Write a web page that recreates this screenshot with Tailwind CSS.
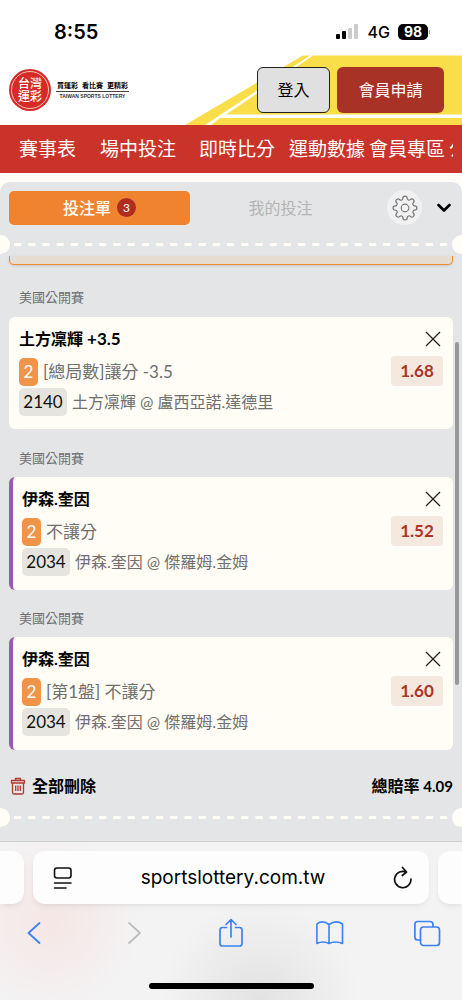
<!DOCTYPE html>
<html lang="zh-Hant">
<head>
    <meta charset="UTF-8" />
    <meta name="viewport" content="width=device-width, initial-scale=1.0" />
    <title>台灣運彩 - 投注單</title>
    <script src="https://cdn.jsdelivr.net/npm/@tailwindcss/browser@4"></script>
</head>
<body class="bg-[#fffdf5] text-black font-[Lato,'Noto_Sans_CJK_TC',sans-serif] overflow-hidden">
    <div class="h-screen flex flex-col">
        <!-- Status bar -->
        <div class="h-[55px] shrink-0 bg-white flex items-center justify-between pt-2 pl-[54px] pr-8 font-[Inter,sans-serif]">
            <span class="text-[20px] font-semibold">8:55</span>
            <div class="flex items-center">
                <svg class="w-6 h-4" viewBox="0 0 24 16">
                    <rect x="0" y="10" width="4" height="5" rx="1" fill="#000" />
                    <rect x="6" y="7" width="4" height="8" rx="1" fill="#000" />
                    <rect x="12" y="4" width="4" height="11" rx="1" fill="#ccc" />
                    <rect x="18" y="0" width="4" height="15" rx="1" fill="#ccc" />
                </svg>
                <span class="ml-2 text-base font-medium">4G</span>
                <span class="ml-2 w-[30px] h-4 rounded-[5px] bg-black text-white text-[14px] leading-4 font-bold text-center">98</span>
                <span class="ml-px w-px h-1 bg-gray-400"></span>
            </div>
        </div>

        <!-- Header -->
        <header class="relative h-[70px] shrink-0 bg-white flex items-center justify-between pl-[9px] pr-[18px]">
            <svg class="absolute right-0 top-0 w-[280px] h-[70px]" viewBox="0 0 280 70" fill="#f9de4a">
                <path d="M3 70 121 0.500H128L23 70z" />
                <path d="M44 59.500 131 0.500H280V59.500z" />
                <path d="M38 63H280V70H29z" />
            </svg>
            <a href="#" class="relative flex items-center gap-[5px]">
                <span class="relative w-[42px] h-[42px] rounded-full bg-[#d62b25] text-white flex items-center justify-center">
                    <span class="absolute inset-[2px] rounded-full border border-white/70"></span>
                    <span class="w-6 text-center text-[12px] leading-[13px] font-medium">台灣<br />運彩</span>
                </span>
                <span class="w-[73px] text-center">
                    <span class="flex justify-between text-[7px] leading-[11px] font-bold border-b border-[#444] px-px"><span>買運彩</span><span>看比賽</span><span>更精彩</span></span>
                    <span class="block text-[5px] leading-[9px] font-bold text-[#333] whitespace-nowrap font-['Liberation_Sans',sans-serif]">TAIWAN SPORTS LOTTERY</span>
                </span>
            </a>
            <div class="relative flex gap-[7px]">
                <button class="w-[73px] h-[46px] rounded-md border border-[#222] bg-[#e0e0e0] text-base">登入</button>
                <button class="w-[107px] h-[46px] rounded-md bg-[#a83226] text-white text-base">會員申請</button>
            </div>
        </header>

        <!-- Menu -->
        <nav class="h-12 shrink-0 bg-[#c93329] pr-[9px]">
            <div class="h-full overflow-hidden flex items-center pl-[19px] text-white text-[19px] whitespace-nowrap">
                <a href="#" class="mr-6">賽事表</a>
                <a href="#" class="mr-[23px]">場中投注</a>
                <a href="#" class="mr-3.5">即時比分</a>
                <a href="#" class="mr-1">運動數據</a>
                <a href="#" class="mr-1">會員專區</a>
                <a href="#">公告</a>
            </div>
        </nav>

        <!-- Bet slip -->
        <main class="relative mt-[9px] flex-1 min-h-0 rounded-t-[10px] bg-[#e4e5e7] overflow-hidden">
            <div class="flex items-center pt-2 px-[9px]">
                <button class="flex-1 h-[34px] rounded-[5px] bg-[#f08330] text-[#fffdf5] text-base font-medium flex items-center justify-center gap-1.5">
                    投注單
                    <span class="w-[19px] h-[19px] rounded-full bg-[#b02c20] text-[12px] leading-[19px]">3</span>
                </button>
                <button class="flex-1 h-[34px] text-base text-[#b4b5b6]">我的投注</button>
                <button class="w-[35px] h-[35px] ml-4 mr-3 rounded-full bg-[#f1f1f1] flex items-center justify-center" aria-label="設定">
                    <svg class="w-[26px] h-[26px]" viewBox="0 0 24 24" fill="none" stroke="#777" stroke-width="1.100" stroke-linejoin="round">
                        <circle cx="12" cy="12" r="3.500" />
                        <path d="M19.400 15a1.650 1.650 0 0 0 .33 1.820l.06.06a2 2 0 0 1-2.830 2.830l-.06-.06a1.650 1.650 0 0 0-1.820-.33 1.650 1.650 0 0 0-1 1.510V21a2 2 0 0 1-4 0v-.09A1.650 1.650 0 0 0 9 19.400a1.650 1.650 0 0 0-1.820.33l-.06.06a2 2 0 0 1-2.830-2.830l.06-.06a1.650 1.650 0 0 0 .33-1.820 1.650 1.650 0 0 0-1.510-1H3a2 2 0 0 1 0-4h.09A1.650 1.650 0 0 0 4.600 9a1.650 1.650 0 0 0-.33-1.820l-.06-.06a2 2 0 0 1 2.830-2.830l.06.06a1.650 1.650 0 0 0 1.820.33H9a1.650 1.650 0 0 0 1-1.510V3a2 2 0 0 1 4 0v.09a1.650 1.650 0 0 0 1 1.510 1.650 1.650 0 0 0 1.820-.33l.06-.06a2 2 0 0 1 2.830 2.830l-.06.06a1.650 1.650 0 0 0-.33 1.820V9a1.650 1.650 0 0 0 1.510 1H21a2 2 0 0 1 0 4h-.09a1.650 1.650 0 0 0-1.510 1z" />
                    </svg>
                </button>
                <button class="w-[19px] h-[34px] flex items-center justify-center" aria-label="收合">
                    <svg class="w-[14px] h-[10px]" viewBox="0 0 14 10" fill="none" stroke="#000" stroke-width="2.600" stroke-linecap="round" stroke-linejoin="round">
                        <path d="M1.500 2 7 7.500 12.500 2" />
                    </svg>
                </button>
            </div>

            <div class="mt-2.5 flex items-center">
                <span class="w-[19px] h-[19px] -ml-[9px] rounded-full bg-[#fffdf5]"></span>
                <svg class="flex-1 h-[3px] mx-1"><line x1="0" x2="100%" y1="1.500" y2="1.500" stroke="#fffdf5" stroke-width="3" stroke-dasharray="7.200 7" /></svg>
                <span class="w-[19px] h-[19px] -mr-[9px] rounded-full bg-[#fffdf5]"></span>
            </div>

            <div class="mt-0.5 mx-[9px] h-[9px] rounded-b-[5px] border border-t-0 border-[#f08c2e] bg-[#e6dccf] shadow-sm"></div>

            <section class="px-[9px] pt-[23px]">
                <h2 class="pl-2.5 text-[13px] leading-[18px] text-[#6f6f6f]">美國公開賽</h2>
                <div class="mt-[11px] h-[112px] rounded-md bg-[#fffdf5] pt-2.5 px-2.5 flex justify-between">
                    <div>
                        <h3 class="h-6 flex items-center gap-1 text-base font-bold">土方凜輝 <span class="text-[17px]">+3.5</span></h3>
                        <p class="mt-[7px] flex items-center gap-[5px] text-[17px] leading-7 text-[#6f6f6f]">
                            <span class="w-[19px] rounded-[5px] bg-[#f0944a] text-white text-center">2</span>
                            <span>[總局數]讓分 -3.5</span>
                        </p>
                        <p class="mt-0.5 flex items-center gap-[5px] text-base leading-7 text-[#6f6f6f]">
                            <span class="w-12 rounded-[5px] bg-[#e6e4de] text-[17px] text-[#111] text-center">2140</span>
                            <span>土方凜輝 @ 盧西亞諾.達德里</span>
                        </p>
                    </div>
                    <div class="flex flex-col items-end">
                        <button class="w-5 h-6 flex items-center justify-center" aria-label="移除">
                            <svg class="w-4 h-4" viewBox="0 0 16 16" stroke="#222" stroke-width="1.300"><path d="M1 1 15 15M15 1 1 15" /></svg>
                        </button>
                        <span class="mt-[5px] w-[52px] rounded bg-[#f5e8df] text-[17px] leading-[30px] font-bold text-[#ab3427] text-center">1.68</span>
                    </div>
                </div>
            </section>

            <section class="px-[9px] pt-5">
                <h2 class="pl-2.5 text-[13px] leading-[18px] text-[#6f6f6f]">美國公開賽</h2>
                <div class="mt-2.5 h-[113px] rounded-md border-l-4 border-[#9b59b6] bg-[#fffdf5] pt-2.5 pl-[9px] pr-2.5 flex justify-between">
                    <div>
                        <h3 class="h-6 flex items-center text-base font-bold">伊森.奎因</h3>
                        <p class="mt-[7px] flex items-center gap-[5px] text-[17px] leading-7 text-[#6f6f6f]">
                            <span class="w-[19px] rounded-[5px] bg-[#f0944a] text-white text-center">2</span>
                            <span>不讓分</span>
                        </p>
                        <p class="mt-0.5 flex items-center gap-[5px] text-base leading-7 text-[#6f6f6f]">
                            <span class="w-12 rounded-[5px] bg-[#e6e4de] text-[17px] text-[#111] text-center">2034</span>
                            <span>伊森.奎因 @ 傑羅姆.金姆</span>
                        </p>
                    </div>
                    <div class="flex flex-col items-end">
                        <button class="w-5 h-6 flex items-center justify-center" aria-label="移除">
                            <svg class="w-4 h-4" viewBox="0 0 16 16" stroke="#222" stroke-width="1.300"><path d="M1 1 15 15M15 1 1 15" /></svg>
                        </button>
                        <span class="mt-[5px] w-[52px] rounded bg-[#f5e8df] text-[17px] leading-[30px] font-bold text-[#ab3427] text-center">1.52</span>
                    </div>
                </div>
            </section>

            <section class="px-[9px] pt-[19px]">
                <h2 class="pl-2.5 text-[13px] leading-[18px] text-[#6f6f6f]">美國公開賽</h2>
                <div class="mt-2.5 h-[113px] rounded-md border-l-4 border-[#9b59b6] bg-[#fffdf5] pt-2.5 pl-[9px] pr-2.5 flex justify-between">
                    <div>
                        <h3 class="h-6 flex items-center text-base font-bold">伊森.奎因</h3>
                        <p class="mt-[7px] flex items-center gap-[5px] text-[17px] leading-7 text-[#6f6f6f]">
                            <span class="w-[19px] rounded-[5px] bg-[#f0944a] text-white text-center">2</span>
                            <span>[第1盤] 不讓分</span>
                        </p>
                        <p class="mt-0.5 flex items-center gap-[5px] text-base leading-7 text-[#6f6f6f]">
                            <span class="w-12 rounded-[5px] bg-[#e6e4de] text-[17px] text-[#111] text-center">2034</span>
                            <span>伊森.奎因 @ 傑羅姆.金姆</span>
                        </p>
                    </div>
                    <div class="flex flex-col items-end">
                        <button class="w-5 h-6 flex items-center justify-center" aria-label="移除">
                            <svg class="w-4 h-4" viewBox="0 0 16 16" stroke="#222" stroke-width="1.300"><path d="M1 1 15 15M15 1 1 15" /></svg>
                        </button>
                        <span class="mt-[5px] w-[52px] rounded bg-[#f5e8df] text-[17px] leading-[30px] font-bold text-[#ab3427] text-center">1.60</span>
                    </div>
                </div>
            </section>

            <div class="mt-6 px-[9px] flex items-center justify-between text-base leading-6 font-bold">
                <button class="flex items-center gap-1.5">
                    <svg class="w-[17px] h-[18px]" viewBox="0 0 17 18" fill="none" stroke="#b23a30" stroke-width="1.300" stroke-linejoin="round">
                        <path d="M2.500 3.500H15.500V6H2.500zM6.500 3.500V1.500H11.500V3.500M3.500 6V15.500Q3.500 17 5 17H13Q14.500 17 14.500 15.500V6M6.700 8.500V14M9 8.500V14M11.300 8.500V14" />
                    </svg>
                    全部刪除
                </button>
                <span>總賠率 <span class="text-[15px]">4.09</span></span>
            </div>

            <div class="mt-2.5 flex items-center">
                <span class="w-[19px] h-[19px] -ml-[9px] rounded-full bg-[#fffdf5]"></span>
                <svg class="flex-1 h-[3px] mx-1"><line x1="0" x2="100%" y1="1.500" y2="1.500" stroke="#fffdf5" stroke-width="3" stroke-dasharray="7.200 7" /></svg>
                <span class="w-[19px] h-[19px] -mr-[9px] rounded-full bg-[#fffdf5]"></span>
            </div>

            <!-- Scroll thumb -->
            <div class="absolute right-[3px] top-40 w-1 h-[343px] rounded-full bg-[#98989a]"></div>
        </main>

        <!-- Browser toolbar -->
        <footer class="shrink-0 h-[159px] border-t border-[#cfd0d1] bg-[#f3f3f4] bg-[radial-gradient(circle_at_50px_80px,#f5e6e5,transparent_90px),radial-gradient(circle_at_260px_159px,#e2e2e3,transparent_100px)] font-[Inter,sans-serif]">
            <div class="pt-[9px] flex gap-[9px]">
                <div class="w-6 h-[53px] rounded-r-xl bg-[#fdfdfd] shadow-md shadow-black/5"></div>
                <div class="flex-1 h-[53px] rounded-xl bg-[#fdfdfd] shadow-md shadow-black/5 flex items-center justify-between pl-5 pr-4">
                    <button aria-label="頁面選單">
                        <svg class="w-5 h-6" viewBox="0 0 20 24" fill="none" stroke="#111" stroke-width="1.600" stroke-linecap="round">
                            <rect x="1.500" y="2" width="16.500" height="10" rx="2.500" />
                            <path d="M1.500 17H18M1.500 22H13" />
                        </svg>
                    </button>
                    <span class="pt-0.5 text-[19px]">sportslottery.com.tw</span>
                    <button aria-label="重新載入">
                        <svg class="w-5 h-6" viewBox="0 0 20 24" fill="none" stroke="#111" stroke-width="1.700" stroke-linecap="round" stroke-linejoin="round">
                            <path d="M18 13A8.200 8.200 0 1 1 13.500 6.200M9.500 1.500 13.500 6 9.300 9.500" />
                        </svg>
                    </button>
                </div>
                <div class="w-6 h-[53px] rounded-l-xl bg-[#fdfdfd] shadow-md shadow-black/5"></div>
            </div>
            <div class="mt-[13px] px-5 flex items-center justify-between text-[#3b82f7]">
                <button class="w-7 flex justify-center" aria-label="上一頁">
                    <svg class="w-4 h-8" viewBox="0 0 16 32" fill="none" stroke="currentColor" stroke-width="1.800" stroke-linecap="round" stroke-linejoin="round"><path d="M13.500 6 2.500 16 13.500 26" /></svg>
                </button>
                <button class="w-7 flex justify-center text-[#bdbdbe]" aria-label="下一頁">
                    <svg class="w-4 h-8" viewBox="0 0 16 32" fill="none" stroke="currentColor" stroke-width="1.800" stroke-linecap="round" stroke-linejoin="round"><path d="M4 6 15 16 4 26" /></svg>
                </button>
                <button class="w-7 flex justify-center" aria-label="分享">
                    <svg class="w-7 h-8" viewBox="0 0 28 32" fill="none" stroke="currentColor" stroke-width="1.700" stroke-linecap="round" stroke-linejoin="round"><path d="M9.500 10.500H5.500Q3 10.500 3 13V26.500Q3 29 5.500 29H22.500Q25 29 25 26.500V13Q25 10.500 22.500 10.500H18.500M14 20V2.500M9 7.500 14 2.500 19 7.500" /></svg>
                </button>
                <button class="w-7 flex justify-center" aria-label="書籤">
                    <svg class="w-7 h-8" viewBox="0 0 28 32" fill="none" stroke="currentColor" stroke-width="1.600" stroke-linecap="round" stroke-linejoin="round"><path d="M13 7.500Q6.500 2.500 .9 7V26.500Q7 23.500 13 26.500Q19 23.500 26.500 26.500V7Q20 2.500 13 7.500V26.500" /></svg>
                </button>
                <button class="w-7 flex justify-center" aria-label="分頁">
                    <svg class="w-7 h-8" viewBox="0 0 28 32" fill="none" stroke="currentColor" stroke-width="1.700" stroke-linejoin="round"><rect x="6.500" y="10" width="19" height="18.500" rx="3" /><path d="M6.500 23H3.500Q.9 23 .9 20V7.500Q.9 4.500 3.500 4.500H16Q19 4.500 19 7.500V10" /></svg>
                </button>
            </div>
            <div class="mt-[34px] mx-auto w-[165px] h-1.5 rounded-full bg-black"></div>
        </footer>
    </div>
</body>
</html>
